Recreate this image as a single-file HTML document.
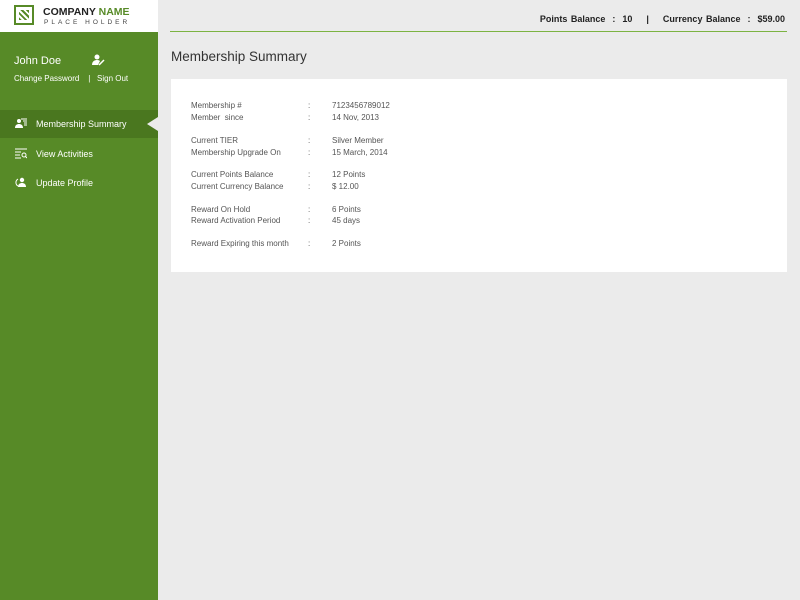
<!DOCTYPE html>
<html><head><style>
*{margin:0;padding:0;box-sizing:border-box}
body{width:800px;height:600px;background:#ebebeb;font-family:"Liberation Sans",sans-serif;position:relative;overflow:hidden}
.side{position:absolute;left:0;top:0;width:158px;height:600px;background:#578a27}
.logo{position:absolute;left:0;top:0;width:158px;height:32px;background:#fff}
.lbox{position:absolute;left:14px;top:5px;width:20px;height:20px;border:2px solid #578a27;background:#fff}
.lbox i{position:absolute;left:3px;top:3px;width:10px;height:10px;background:repeating-linear-gradient(45deg,#578a27 0 2px,#fff 2px 4px)}
.cn{position:absolute;left:43px;top:6px;font-size:10.5px;font-weight:bold;color:#222}
.cn span{color:#578a27}
.ph{position:absolute;left:44px;top:19px;font-size:6.5px;letter-spacing:3px;color:#444}
.w{position:absolute;color:#fff}
.act{position:absolute;left:0;top:110px;width:158px;height:28px;background:#4a771f}
.tri{position:absolute;left:147px;top:117px;width:0;height:0;border-top:7px solid transparent;border-bottom:7px solid transparent;border-right:11px solid #ebebeb}
.ico{position:absolute;left:15px;width:12px;height:11px}
.top{position:absolute;right:15px;top:14px;font-size:9px;font-weight:bold;color:#222;word-spacing:1px}
.line{position:absolute;left:170px;top:31px;width:617px;height:1px;background:#7cb342}
h1{position:absolute;left:171px;top:49px;font-size:13.5px;font-weight:normal;color:#333}
.card{position:absolute;left:171px;top:79px;width:616px;height:193px;background:#fff}
.r{position:absolute;font-size:8px;color:#555}
</style></head><body>
<div class="side">
<div class="logo"><div class="lbox"><i></i></div><div class="cn">COMPANY <span>NAME</span></div><div class="ph">PLACE HOLDER</div></div>
<div class="w" style="left:14px;top:55px;font-size:11px">John Doe</div>
<svg class="w" style="left:92px;top:54px" width="13" height="12" viewBox="0 0 13 12"><circle cx="5" cy="3" r="2.5" fill="#fff"/><path d="M0 11c0-4 3-5 5-5s3 1 3 1L6 11z" fill="#fff"/><path d="M7 11l5-5" stroke="#fff" stroke-width="1.5"/></svg>
<div class="w" style="left:14px;top:74px;font-size:8px">Change Password &nbsp;&nbsp;&nbsp;| &nbsp;&nbsp;Sign Out</div>
<div class="act"></div><div class="tri"></div>
<svg class="ico" style="top:118px" viewBox="0 0 12 11"><circle cx="4" cy="3" r="2" fill="#fff"/><path d="M0 10c0-3 2-4 4-4s4 1 4 4z" fill="#fff"/><path d="M6 1h6M8 3h4M9 5h3M9 7h3" stroke="#fff"/></svg>
<div class="w" style="left:36px;top:119px;font-size:9px">Membership Summary</div>
<svg class="ico" style="top:148px" viewBox="0 0 12 11"><path d="M0 1h12M0 4h6M0 7h5M0 10h6" stroke="#fff"/><circle cx="9" cy="7" r="2" fill="none" stroke="#fff"/><path d="M10.5 8.5l1.5 1.5" stroke="#fff"/></svg>
<div class="w" style="left:36px;top:149px;font-size:9px">View Activities</div>
<svg class="ico" style="top:177px" viewBox="0 0 12 11"><circle cx="7" cy="3" r="2.2" fill="#fff"/><path d="M3 10c0-3 2-4 4-4s4 1 4 4z" fill="#fff"/><path d="M3 2a4 4 0 0 0 0 7" stroke="#fff" fill="none"/></svg>
<div class="w" style="left:36px;top:178px;font-size:9px">Update Profile</div>
</div>
<div class="top">Points Balance &nbsp;: &nbsp;10 &nbsp;&nbsp;&nbsp;| &nbsp;&nbsp;&nbsp;Currency Balance &nbsp;: &nbsp;$59.00</div>
<div class="line"></div>
<h1>Membership Summary</h1>
<div class="card"></div>
<div class="r" style="left:191px;top:101px">Membership #</div><div class="r" style="left:308px;top:101px">:</div><div class="r" style="left:332px;top:101px">7123456789012</div>
<div class="r" style="left:191px;top:113px">Member &nbsp;since</div><div class="r" style="left:308px;top:113px">:</div><div class="r" style="left:332px;top:113px">14 Nov, 2013</div>
<div class="r" style="left:191px;top:136px">Current TIER</div><div class="r" style="left:308px;top:136px">:</div><div class="r" style="left:332px;top:136px">Silver Member</div>
<div class="r" style="left:191px;top:148px">Membership Upgrade On</div><div class="r" style="left:308px;top:148px">:</div><div class="r" style="left:332px;top:148px">15 March, 2014</div>
<div class="r" style="left:191px;top:170px">Current Points Balance</div><div class="r" style="left:308px;top:170px">:</div><div class="r" style="left:332px;top:170px">12 Points</div>
<div class="r" style="left:191px;top:182px">Current Currency Balance</div><div class="r" style="left:308px;top:182px">:</div><div class="r" style="left:332px;top:182px">$ 12.00</div>
<div class="r" style="left:191px;top:205px">Reward On Hold</div><div class="r" style="left:308px;top:205px">:</div><div class="r" style="left:332px;top:205px">6 Points</div>
<div class="r" style="left:191px;top:216px">Reward Activation Period</div><div class="r" style="left:308px;top:216px">:</div><div class="r" style="left:332px;top:216px">45 days</div>
<div class="r" style="left:191px;top:239px">Reward Expiring this month</div><div class="r" style="left:308px;top:239px">:</div><div class="r" style="left:332px;top:239px">2 Points</div>
</body></html>
